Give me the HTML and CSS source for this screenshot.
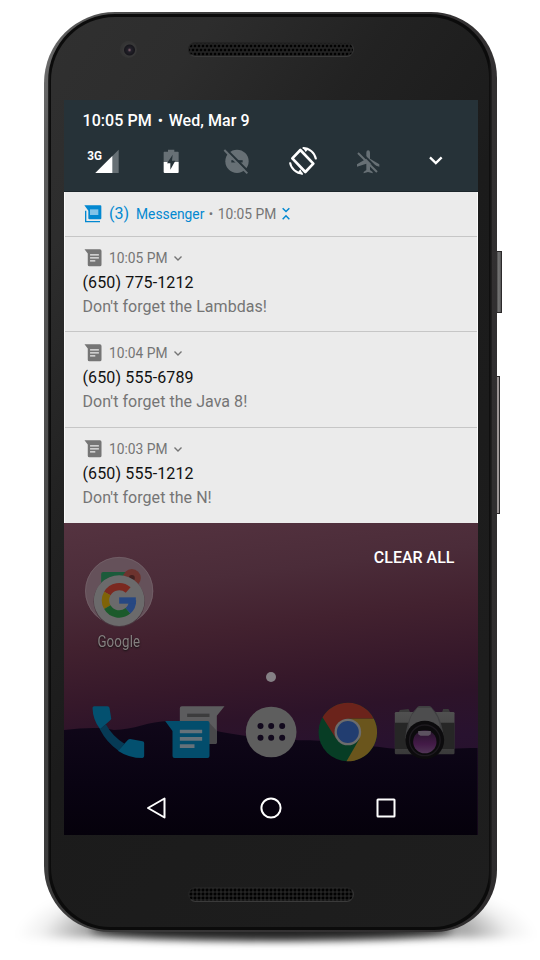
FILE: index.html
```html
<!DOCTYPE html>
<html lang="en">
<head>
<meta charset="utf-8">
<title>Notifications</title>
<link rel="stylesheet" href="styles.css">
</head>
<body>
<svg width="0" height="0" class="defs">
  <symbol id="msg" viewBox="60 55 54 55"><path d="M61 56H108Q113 56 113 61V103Q113 108 108 108H76Q71 108 71 103V69Z" fill="#757575"/><path d="M78 73H105M78 82H105M78 91H94" stroke="#ebebeb" stroke-width="4"/></symbol>
  <symbol id="down" viewBox="0 0 10 10"><path d="M1.5 3.5L5 7L8.500 3.500" fill="none" stroke="#757575" stroke-width="1.4"/></symbol>
</svg>
<div class="stage">
  <div class="shadow-side"></div>
  <div class="shadow-base"></div>
  <div class="button power"></div>
  <div class="button volume"></div>
  <div class="phone"><div class="rim"><div class="face">
    <div class="bezel top"><div class="lens"></div><div class="speaker"></div></div>
    <div class="screen">
      <header class="shade">
        <div class="clock">10:05 PM<span class="dot">•</span>Wed, Mar 9</div>
        <div class="status">
          <svg viewBox="18 135 200 96"><text x="70" y="180" class="net" textLength="44" lengthAdjust="spacingAndGlyphs">3G</text><path d="M164 149V219H94Z" fill="#677075"/><path d="M145 168V219H94Z" fill="#fff"/></svg>
          <svg viewBox="218 135 200 96"><path d="M300 155H311V149H330V155H341Q343 155 343 157V186H298V157Q298 155 300 155Z" fill="#677075"/><path d="M298 186H343V216Q343 219 340 219H301Q298 219 298 216Z" fill="#fff"/><path d="M325 164L308 190H318V209L333 182H323Z" fill="#263238"/></svg>
          <svg viewBox="418 135 200 96"><circle cx="520" cy="184" r="35" fill="#677075"/><path d="M503 184H537" stroke="#263238" stroke-width="7"/><path d="M488 149L556 217" stroke="#263238" stroke-width="7"/><path d="M482 150L551 220" stroke="#677075" stroke-width="6"/></svg>
          <svg viewBox="0 135 200 96"><g fill="none" stroke="#fff"><path d="M91 150L130 191L106 216L67 175Z" stroke-width="8" stroke-linejoin="round"/><path d="M98 144A40 40 0 0 1 138 178M60 187A40 40 0 0 0 98 221" stroke-width="6"/></g><path d="M98 141L115 148L107 156ZM99 224L82 219L91 208Z" fill="#fff"/></svg>
          <svg viewBox="200 135 200 96"><path d="M288 158Q288 151 293.500 151Q299 151 299 158V176L327 193V200L299 191V210L307 216V220L293 216L280 220V216L288 210V191L260 200V193L288 176Z" fill="#677075"/><path d="M269 154L326 211" stroke="#263238" stroke-width="6"/><path d="M263 159L320 216" stroke="#677075" stroke-width="6"/></svg>
          <svg viewBox="400 135 200 96"><path d="M481 172L498.500 189L516 172" fill="none" stroke="#fff" stroke-width="7"/></svg>
        </div>
      </header>
      <main class="notes">
        <div class="group">
          <svg class="gicon" viewBox="60 310 54 57"><path d="M61 314H109Q112 314 112 317V353Q112 356 109 356H76Q73 356 73 353V330Z" fill="#0288d1"/><path d="M78 326H103V343H78Z" fill="#81c3e8"/><path d="M65 330V363H108" fill="none" stroke="#0288d1" stroke-width="4"/></svg>
          <span class="count">(3)</span><span class="app">Messenger</span><span class="gdot">•</span><span class="gtime">10:05 PM</span>
          <svg class="collapse" viewBox="38 320 24 38"><path d="M40 323L50 333L60 323M40 356L50 346L60 356" fill="none" stroke="#0288d1" stroke-width="4.500"/></svg>
        </div>
        <article class="note"><div class="meta"><svg class="micon"><use href="#msg"/></svg><span>10:05 PM</span><svg class="arrow"><use href="#down"/></svg></div><h2>(650) 775-1212</h2><p>Don't forget the Lambdas!</p></article>
        <article class="note"><div class="meta"><svg class="micon"><use href="#msg"/></svg><span>10:04 PM</span><svg class="arrow"><use href="#down"/></svg></div><h2>(650) 555-6789</h2><p>Don't forget the Java 8!</p></article>
        <article class="note"><div class="meta"><svg class="micon"><use href="#msg"/></svg><span>10:03 PM</span><svg class="arrow"><use href="#down"/></svg></div><h2>(650) 555-1212</h2><p>Don't forget the N!</p></article>
      </main>
      <section class="home">
        <svg class="hills" viewBox="0 0 414 312" preserveAspectRatio="none">
          <defs><linearGradient id="hill" x1="0" y1="0" x2="0" y2="1"><stop offset="0" stop-color="#100719"/><stop offset=".55" stop-color="#090312"/><stop offset="1" stop-color="#05010b"/></linearGradient></defs>
          <path d="M0 207C20 205 35 204 50 207C70 207 85 198 105 198C130 202 150 209 190 214C220 219 235 216 260 218C300 221 310 224 334 226C360 230 385 224 414 225V312H0Z" fill="url(#hill)"/>
        </svg>
        <div class="clear">CLEAR ALL</div>
        <div class="folder">
          <svg viewBox="60 78 212 216">
            <circle cx="165" cy="183" r="102" fill="#65515a"/><circle cx="165" cy="183" r="101" fill="none" stroke="#77656c" stroke-width="2"/>
            <rect x="111" y="126" width="90" height="54" rx="6" fill="#1b5b3b"/><circle cx="203" cy="144" r="27" fill="#6d332e"/><circle cx="203" cy="144" r="9" fill="#42201f"/>
            <circle cx="165" cy="214" r="77" fill="#49363f"/><circle cx="165" cy="212" r="76" fill="#6b6a6b"/>
            <g fill="none" stroke-width="22"><path d="M129.500 190.500A41 41 0 0 1 192 180" stroke="#7b2920"/><path d="M129.500 231.500A41 41 0 0 1 129.500 190.500" stroke="#7f6307"/><path d="M191.400 242.400A41 41 0 0 1 129.500 231.500" stroke="#1b5a2b"/><path d="M205 211A41 41 0 0 1 191.400 242.400" stroke="#264782"/></g>
            <path d="M165 202H215V221H165Z" fill="#264782"/>
          </svg>
          <span>Google</span>
        </div>
        <div class="pager"></div>
        <div class="dock">
          <svg viewBox="43.500 60 231 192"><path d="M89 79H129Q134 79 135 84L140 115Q140 118 138 120L107 148Q85 120 84 84Q84 79 89 79Z" fill="#03506f"/><path d="M160 212L190 180Q193 177 197 177L234 184Q239 184 239 189V228Q239 233 234 234Q193 234 160 212Z" fill="#03506f"/><path d="M124 133L106 148Q127 189 162 212L180 191Q145 171 124 133Z" fill="#063a55"/></svg>
          <svg viewBox="274.500 60 231 192"><path d="M352 79H480L457 107V187Q457 192 452 192H352Q346 192 346 186V85Q346 79 352 79Z" fill="#5c5c5e"/><path d="M434 128L457 152V187Q457 192 452 192H434Z" fill="#49494b"/><path d="M368 106H435" stroke="#3c3c3d" stroke-width="10"/><path d="M302 123H429Q435 123 435 129V228Q435 234 429 234H330Q324 234 324 228V153Z" fill="#034d6c"/><path d="M346 154.500H413M346 176.500H413M346 198.500H390" stroke="#65727a" stroke-width="11"/></svg>
          <svg viewBox="505.500 60 231 192"><circle cx="620" cy="156" r="76" fill="#5e5e5e"/><g fill="#12091d"><circle cx="588" cy="138" r="9"/><circle cx="620" cy="138" r="9"/><circle cx="653" cy="138" r="9"/><circle cx="588" cy="173" r="9"/><circle cx="620" cy="173" r="9"/><circle cx="653" cy="173" r="9"/></g></svg>
          <svg viewBox="118.500 60 231 192"><circle cx="232" cy="156" r="88" fill="#073d25"/><path d="M156 112A88 88 0 0 1 310 116H232L197 176Z" fill="#6b231b"/><path d="M310 116A88 88 0 0 1 228 244L267 176L232 116Z" fill="#6a551c"/><circle cx="232" cy="156" r="40" fill="#6c6c6c"/><circle cx="232" cy="156" r="33" fill="#213d70"/></svg>
          <svg viewBox="349.500 60 231 192"><defs><linearGradient id="lens" x1="0" y1="0" x2="0" y2="1"><stop offset="0" stop-color="#25142a"/><stop offset=".6" stop-color="#431a47"/><stop offset="1" stop-color="#513556"/></linearGradient><linearGradient id="body" x1="0" y1="0" x2="0" y2="1"><stop offset="0" stop-color="#505050"/><stop offset="1" stop-color="#3a3a3a"/></linearGradient></defs><path d="M384 99L388 90L414 87L420 99ZM514 99L518 87H534L540 99Z" fill="#3a3a3a"/><rect x="373" y="96" width="179" height="127" rx="4" fill="url(#body)"/><path d="M373 128H552V207H373Z" fill="#262626"/><path d="M425 99L441 81Q443 78 447 78H476Q480 78 482 81L498 99Q516 130 520 175L462 205L404 175Q408 130 425 99Z" fill="#3f3f41"/><path d="M413 174Q413 110 432 96L441 83H482L491 96Q511 120 511 174Z" fill="#4d4d4e"/><circle cx="463" cy="180" r="58" fill="#0c0b0d"/><circle cx="463" cy="181" r="46" fill="none" stroke="#1d1a1f" stroke-width="4"/><circle cx="463" cy="185" r="35" fill="url(#lens)"/><path d="M443 153H481V163L474 167H450L443 163Z" fill="#5c5260"/></svg>
        </div>
        <div class="nav">
          <svg viewBox="0 0 24 24"><path d="M20.500 2.500V21.500L4 12Z"/></svg>
          <svg viewBox="0 0 24 24"><circle cx="12" cy="12" r="9.600"/></svg>
          <svg viewBox="0 0 24 24"><rect x="3.500" y="3.500" width="17" height="17" rx=".5"/></svg>
        </div>
      </section>
    </div>
    <div class="bezel bottom"><div class="speaker"></div></div>
  </div></div></div>
</div>
</body>
</html>
```
FILE: styles.css
```css
* { box-sizing: border-box; margin: 0; }
body { width: 540px; height: 960px; background: #fff; overflow: hidden; font-family: Roboto, sans-serif; }
svg { display: block; }
.defs { position: absolute; }
.stage { position: relative; width: 540px; height: 960px; padding: 12px 0 0 44px; }
.shadow-side { position: absolute; left: 16px; top: 862px; width: 520px; height: 76px; background: radial-gradient(ellipse 50% 95% at 50% 100%, rgba(0,0,0,.6), rgba(0,0,0,.32) 75%, rgba(0,0,0,.06) 90%, transparent); filter: blur(4px); }
.shadow-base { position: absolute; left: 90px; top: 920px; width: 362px; height: 20px; background: #222; border-radius: 50%; filter: blur(4px); }
.button { position: absolute; border: solid #2c2a2b; border-width: 1px 1px 1px 0; background: linear-gradient(90deg, #333, #777 55%, #555); }
.power { left: 496px; top: 251px; width: 6px; height: 62px; }
.volume { left: 496px; top: 376px; width: 4px; height: 138px; background: #9a9494; }
.phone { position: relative; width: 453px; height: 920px; padding: 2px 5px 2px 4px; border-radius: 71px 66px 62px 66px; background: linear-gradient(100deg, #777 0, #5c5c5c 4%, #3d3d3d 22%, #333132 70%, #2e2c2d); }
.rim { height: 916px; padding: 3px 3px 3px 3px; border-radius: 67px 62px 58px 62px; background: linear-gradient(90deg, #282828, #0b0b0b 2px, #0b0b0b 441px, #242323); }
.face { height: 910px; padding: 0 11px 0 13px; border-radius: 64px 60px 56px 60px; background: linear-gradient(125deg, #303030, #2d2d2d 15%, #222 32%, #1b1b1b 50%, #1e1e1e); display: flex; flex-direction: column; }
.bezel { position: relative; flex: none; display: flex; }
.top { height: 83px; padding: 25px 0 0 56px; }
.lens { width: 17px; height: 17px; border-radius: 50%; margin-top: -1px; background: radial-gradient(circle at 56% 53%, #8a6673 0, #222029 2px, #17161c 5px, #383838 6px, #343434 8px); }
.speaker { width: 166px; height: 15px; border-radius: 8px; border: 1px solid #232323; border-bottom-color: #3a3a3a; border-right-color: #343434; background-color: #232323; background-image: radial-gradient(circle, #020202 1.1px, transparent 1.7px), radial-gradient(circle, #020202 1.1px, transparent 1.7px); background-size: 4px 8px; background-position: 0 -1px, 2px 3px; }
.top .speaker { margin-left: 51px; }
.bottom { height: 92px; padding: 52px 0 0 124px; }
.bottom .speaker { background-size: 4px 4px; background-position: 0 0; }
.screen { width: 413.5px; height: 735px; flex: none; display: flex; flex-direction: column; }
.shade { height: 92px; background: #263238; color: #fff; padding: 9px 6px 0; border-bottom: 1px solid #1b252a; }
.clock { height: 24px; line-height: 24px; padding-left: 12.5px; font-size: 16px; font-weight: 500; letter-spacing: .07px; white-space: nowrap; }
.dot { font-size: 15px; margin: 0 5.5px 0 6px; }
.status { display: grid; grid-template-columns: repeat(6, 66.67px); margin-top: 12px; }
.status svg { width: 66.67px; height: 32px; }
.net { font: 700 36px Roboto, sans-serif; fill: #fff; }
.notes { height: 331px; background: #ebebeb; border-left: 1px solid #fafafa; border-right: 1px solid #fafafa; }
.group { height: 43.500px; display: flex; align-items: center; padding-left: 19px; color: #757575; font-size: 13.8px; white-space: nowrap; }
.gicon { width: 18px; height: 19px; }
.count { margin-left: 7px; font-size: 16px; color: #0288d1; }
.app { margin-left: 7px; color: #0288d1; }
.gdot { margin: 0 4.5px; font-size: 13px; }
.collapse { width: 8px; height: 13px; margin-left: 6px; }
.note { height: 95.67px; border-top: 1px solid #c6c6c6; padding: 9px 0 0 17.5px; }
.meta { display: flex; align-items: center; height: 24px; font-size: 13.8px; color: #757575; }
.micon { width: 18px; height: 18px; margin: 0 7px 0 1.5px; }
.arrow { width: 10px; height: 10px; margin-left: 5px; }
.note h2, .note p { height: 24px; line-height: 25px; font-size: 16px; font-weight: 400; color: #111; white-space: nowrap; }
.note h2 { letter-spacing: .13px; }
.note p { color: #757575; letter-spacing: .05px; }
.home { position: relative; height: 312px; background: linear-gradient(173deg, #553340 0, #4b2c39 20%, #42212f 35%, #36182a 50%, #2d1329 60%, #28122f 72%, #220f27); display: flex; flex-direction: column; }
.hills { position: absolute; left: 0; top: 0; width: 413.5px; height: 312px; }
.clear { position: relative; height: 34px; padding: 23px 23px 0 0; text-align: right; color: #fff; font-size: 16px; font-weight: 500; line-height: 24px; }
.folder { position: relative; width: 72px; height: 96px; margin-left: 19px; display: flex; flex-direction: column; align-items: center; color: #858080; font-size: 16px; line-height: 20px; }
.folder svg { width: 71px; height: 72px; margin-top: -1px; }
.folder span { margin-top: 4px; transform: scaleX(.83); letter-spacing: .2px; text-shadow: 0 1px 2px #111; }
.pager { position: relative; width: 10px; height: 10px; margin: 19px 0 0 201.5px; border-radius: 50%; background: #858085; }
.dock { position: relative; height: 64px; margin: 18px 0 0 14.5px; display: grid; grid-template-columns: repeat(5, 77px); }
.dock svg { width: 77px; height: 64px; }
.nav { position: relative; display: grid; grid-template-columns: repeat(3, 115px); justify-items: center; margin: 32px 0 0 34px; }
.nav svg { width: 24px; height: 24px; fill: none; stroke: #fff; stroke-width: 2; stroke-linejoin: round; }
```
